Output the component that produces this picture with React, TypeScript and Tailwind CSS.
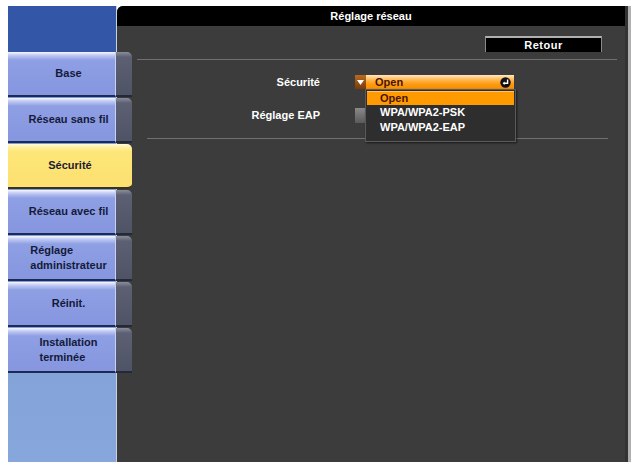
import React from "react";

const font = { fontFamily: '"Liberation Sans", Arial, sans-serif' };

function SideButton({ label, active }: { label: React.ReactNode; active?: boolean }) {
  if (active) {
    return (
      <div className="flex h-[45px] w-[124px] items-center justify-center rounded-r-[5px] border-b-2 border-[#3a3220] bg-[linear-gradient(to_bottom,#fffbe0_0px,#fff0a0_3px,#fde678_8px,#fce070_100%)] text-[11px] font-bold leading-[15px] text-[#1a1a30]">
        {label}
      </div>
    );
  }
  return (
    <div className="flex h-[45px] w-[124px]">
      <div className="flex w-[108px] items-center justify-center border-b-2 border-r border-b-[#1c2a55] border-r-[#c8d2f0] bg-[linear-gradient(to_bottom,#f6f8ff_0px,#c4ccf4_3px,#8e9fe4_8px,#8696df_100%)] pl-[14px] text-[11px] font-bold leading-[15px] text-[#141a3a]">
        {label}
      </div>
      <div className="w-[16px] rounded-tr-[5px] border-b-2 border-[#23283a] bg-[linear-gradient(to_bottom,#8a8e9c_0px,#5c6072_5px,#4f5366_100%)]" />
    </div>
  );
}

export default function App() {
  return (
    <div className="flex h-[462px] w-[631px] bg-white pl-[8px] pt-[6px]" style={font}>
      {/* sidebar */}
      <div className="relative z-10 flex w-[109px] flex-col border-r border-[#c8d0e4] bg-[linear-gradient(to_bottom,#7796cc,#86a6dc)]">
        <div className="h-[46px] bg-[#3456a6]" />
        <div className="flex flex-col gap-[1px]">
          <SideButton label="Base" />
          <SideButton label="Réseau sans fil" />
          <SideButton label="Sécurité" active />
          <SideButton label="Réseau avec fil" />
          <SideButton
            label={
              <div className="text-left">
                Réglage
                <br />
                administrateur
              </div>
            }
          />
          <SideButton label="Réinit." />
          <SideButton
            label={
              <div className="text-left">
                Installation
                <br />
                terminée
              </div>
            }
          />
        </div>
      </div>

      {/* main panel */}
      <div className="relative flex w-[511px] flex-col overflow-hidden rounded-tl-[6px] border-r-[3px] border-[#333333] bg-[#3c3c3c]">
        <div className="flex h-[20px] items-center justify-center bg-black text-[11px] font-bold text-white">
          Réglage réseau
        </div>
        <div className="mt-[10px] flex justify-end pr-[23px]">
          <div className="flex h-[16px] w-[117px] items-center justify-center border-x border-t-2 border-x-[#8a8a8a] border-t-[#b0b0b0] bg-black text-[11px] font-bold tracking-[0.5px] text-white">
            Retour
          </div>
        </div>
        <div className="ml-[20px] mr-[8px] mt-[7px] h-px bg-[#707070]" />

        {/* rows */}
        <div className="relative mt-[15px] flex flex-col">
          <div className="flex h-[14px] items-center">
            <div className="w-[203px] text-right text-[11px] font-bold text-white">Sécurité</div>
            <div className="ml-[35px] flex h-[14px]">
              <div className="flex w-[11px] items-center justify-center bg-[linear-gradient(to_bottom,#b86a20,#7a3a08)]">
                <svg width="7" height="5" viewBox="0 0 7 5">
                  <path d="M0 0 H7 L3.5 5 Z" fill="#ffffff" />
                </svg>
              </div>
              <div className="flex w-[148px] items-center justify-between bg-[linear-gradient(to_bottom,#ffe8c8_0px,#ffbf60_4px,#ff9a10_9px,#f59000_100%)] pl-[9px] pr-[3px] text-[11px] font-bold text-[#4a1200]">
                <span>Open</span>
                <svg width="11" height="11" viewBox="0 0 11 11">
                  <circle cx="5.5" cy="5.5" r="5.2" fill="#111111" />
                  <path d="M7.6 2.6 V6.2 H4" stroke="#ffffff" strokeWidth="1.4" fill="none" />
                  <path d="M2.6 6.2 L4.6 4.4 V8 Z" fill="#ffffff" />
                </svg>
              </div>
            </div>
          </div>

          <div className="mt-[19px] flex h-[15px] items-center">
            <div className="w-[203px] text-right text-[11px] font-bold text-white">Réglage EAP</div>
            <div className="ml-[35px] flex h-[15px]">
              <div className="w-[11px] bg-[linear-gradient(to_bottom,#8a8a8a,#5a5a5a)]" />
              <div className="w-[148px] bg-[linear-gradient(to_bottom,#7a7a7a,#555555)]" />
            </div>
          </div>

          {/* dropdown list */}
          <div className="absolute left-[248px] top-[14px] z-20 flex w-[151px] flex-col border border-[#5a5a5a] bg-[#2e2e2e] p-[1px] shadow-[1px_1px_2px_rgba(0,0,0,0.6)]">
            <div className="flex h-[14px] items-center border-t border-[#ffc070] bg-[#ff9a00] pl-[13px] text-[11px] font-bold text-[#4a1200]">
              Open
            </div>
            <div className="flex h-[15px] items-center pl-[13px] text-[11px] font-bold text-white">
              WPA/WPA2-PSK
            </div>
            <div className="flex h-[15px] items-center pl-[13px] text-[11px] font-bold text-white">
              WPA/WPA2-EAP
            </div>
            <div className="h-[5px]" />
          </div>
        </div>

        <div className="ml-[30px] mr-[17px] mt-[15px] h-px bg-[#707070]" />
      </div>
      <div className="flex-1 bg-[#b0b0b0]" />
    </div>
  );
}
